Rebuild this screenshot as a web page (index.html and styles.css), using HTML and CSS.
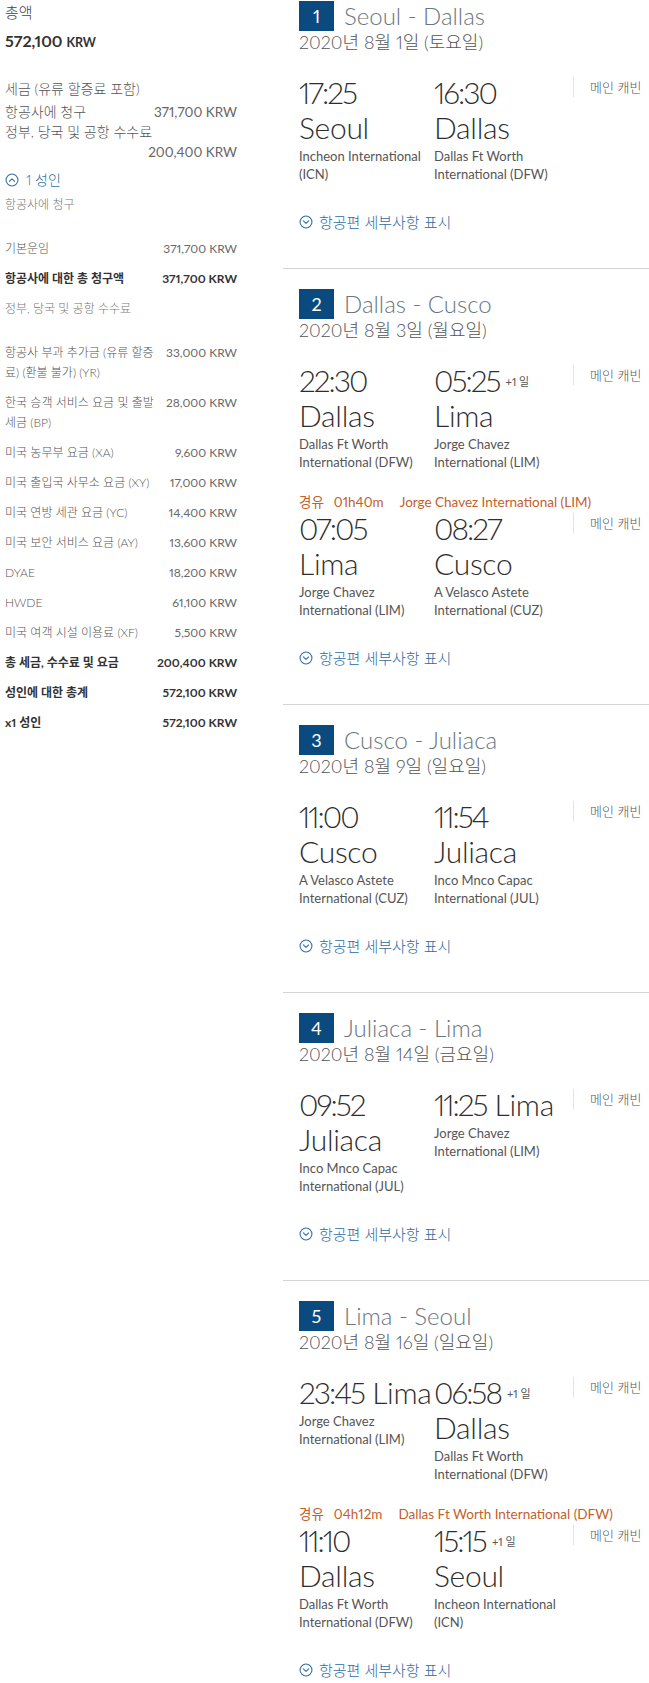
FILE: index.html
```html
<!DOCTYPE html>
<html lang="ko">
<head>
<meta charset="utf-8">
<title>여정 요약</title>
<link rel="stylesheet" href="styles.css">
</head>
<body>
<div class="page">
  <aside class="summary">
    <div class="total-label">총액</div>
    <div class="total-amount">572,100 <span class="cur">KRW</span></div>
    <div class="tax-head">세금 (유류 할증료 포함)</div>
    <div class="split"><span>항공사에 청구</span><span class="split-amt">371,700 KRW</span></div>
    <div class="split"><span>정부, 당국 및 공항 수수료</span><span class="split-amt">200,400 KRW</span></div>
    <div class="toggle">
      <svg class="ico" viewBox="0 0 16 16"><circle cx="8" cy="8" r="6.8"/><path d="M5 9.6l3-3 3 3"/></svg>
      <span>1 성인</span>
    </div>
    <div class="group-label">항공사에 청구</div>
    <div class="row"><span class="label">기본운임</span><span class="amt">371,700 KRW</span></div>
    <div class="row strong"><span class="label">항공사에 대한 총 청구액</span><span class="amt">371,700 KRW</span></div>
    <div class="group-label">정부, 당국 및 공항 수수료</div>
    <div class="row"><span class="label">항공사 부과 추가금 (유류 할증료) (환불 불가) (YR)</span><span class="amt">33,000 KRW</span></div>
    <div class="row"><span class="label">한국 승객 서비스 요금 및 출발 세금 (BP)</span><span class="amt">28,000 KRW</span></div>
    <div class="row"><span class="label">미국 농무부 요금 (XA)</span><span class="amt">9,600 KRW</span></div>
    <div class="row"><span class="label">미국 출입국 사무소 요금 (XY)</span><span class="amt">17,000 KRW</span></div>
    <div class="row"><span class="label">미국 연방 세관 요금 (YC)</span><span class="amt">14,400 KRW</span></div>
    <div class="row"><span class="label">미국 보안 서비스 요금 (AY)</span><span class="amt">13,600 KRW</span></div>
    <div class="row"><span class="label">DYAE</span><span class="amt">18,200 KRW</span></div>
    <div class="row"><span class="label">HWDE</span><span class="amt">61,100 KRW</span></div>
    <div class="row"><span class="label">미국 여객 시설 이용료 (XF)</span><span class="amt">5,500 KRW</span></div>
    <div class="row strong"><span class="label">총 세금, 수수료 및 요금</span><span class="amt">200,400 KRW</span></div>
    <div class="row strong"><span class="label">성인에 대한 총계</span><span class="amt">572,100 KRW</span></div>
    <div class="row strong"><span class="label">x1 성인</span><span class="amt">572,100 KRW</span></div>
  </aside>

  <main class="trips">
    <section class="segment">
      <div class="seg-head"><span class="badge">1</span><span class="route">Seoul - Dallas</span></div>
      <div class="seg-date">2020년 8월 1일 (토요일)</div>
      <div class="flight">
        <div class="pt"><div class="tc"><span class="time">17:25</span><span class="city">Seoul</span></div><div class="airport">Incheon International (ICN)</div></div>
        <div class="pt"><div class="tc"><span class="time">16:30</span><span class="city">Dallas</span></div><div class="airport">Dallas Ft Worth International (DFW)</div></div>
        <div class="cabin">메인 캐빈</div>
      </div>
      <div class="details"><svg class="ico" viewBox="0 0 16 16"><circle cx="8" cy="8" r="6.8"/><path d="M5 6.6l3 3 3-3"/></svg><span>항공편 세부사항 표시</span></div>
    </section>

    <section class="segment">
      <div class="seg-head"><span class="badge">2</span><span class="route">Dallas - Cusco</span></div>
      <div class="seg-date">2020년 8월 3일 (월요일)</div>
      <div class="flight">
        <div class="pt"><div class="tc"><span class="time">22:30</span><span class="city">Dallas</span></div><div class="airport">Dallas Ft Worth International (DFW)</div></div>
        <div class="pt"><div class="tc"><span class="time">05:25</span><span class="plus">+1 일</span><span class="city">Lima</span></div><div class="airport">Jorge Chavez International (LIM)</div></div>
        <div class="cabin">메인 캐빈</div>
      </div>
      <div class="layover"><span class="lay-k">경유</span><span class="lay-t">01h40m</span><span>Jorge Chavez International (LIM)</span></div>
      <div class="flight">
        <div class="pt"><div class="tc"><span class="time">07:05</span><span class="city">Lima</span></div><div class="airport">Jorge Chavez International (LIM)</div></div>
        <div class="pt"><div class="tc"><span class="time">08:27</span><span class="city">Cusco</span></div><div class="airport">A Velasco Astete International (CUZ)</div></div>
        <div class="cabin">메인 캐빈</div>
      </div>
      <div class="details"><svg class="ico" viewBox="0 0 16 16"><circle cx="8" cy="8" r="6.8"/><path d="M5 6.6l3 3 3-3"/></svg><span>항공편 세부사항 표시</span></div>
    </section>

    <section class="segment">
      <div class="seg-head"><span class="badge">3</span><span class="route">Cusco - Juliaca</span></div>
      <div class="seg-date">2020년 8월 9일 (일요일)</div>
      <div class="flight">
        <div class="pt"><div class="tc"><span class="time">11:00</span><span class="city">Cusco</span></div><div class="airport">A Velasco Astete International (CUZ)</div></div>
        <div class="pt"><div class="tc"><span class="time">11:54</span><span class="city">Juliaca</span></div><div class="airport">Inco Mnco Capac International (JUL)</div></div>
        <div class="cabin">메인 캐빈</div>
      </div>
      <div class="details"><svg class="ico" viewBox="0 0 16 16"><circle cx="8" cy="8" r="6.8"/><path d="M5 6.6l3 3 3-3"/></svg><span>항공편 세부사항 표시</span></div>
    </section>

    <section class="segment">
      <div class="seg-head"><span class="badge">4</span><span class="route">Juliaca - Lima</span></div>
      <div class="seg-date">2020년 8월 14일 (금요일)</div>
      <div class="flight">
        <div class="pt"><div class="tc"><span class="time">09:52</span><span class="city">Juliaca</span></div><div class="airport">Inco Mnco Capac International (JUL)</div></div>
        <div class="pt"><div class="tc one-line"><span class="time">11:25</span><span class="city">Lima</span></div><div class="airport">Jorge Chavez International (LIM)</div></div>
        <div class="cabin">메인 캐빈</div>
      </div>
      <div class="details"><svg class="ico" viewBox="0 0 16 16"><circle cx="8" cy="8" r="6.8"/><path d="M5 6.6l3 3 3-3"/></svg><span>항공편 세부사항 표시</span></div>
    </section>

    <section class="segment">
      <div class="seg-head"><span class="badge">5</span><span class="route">Lima - Seoul</span></div>
      <div class="seg-date">2020년 8월 16일 (일요일)</div>
      <div class="flight">
        <div class="pt"><div class="tc one-line"><span class="time">23:45</span><span class="city">Lima</span></div><div class="airport">Jorge Chavez International (LIM)</div></div>
        <div class="pt"><div class="tc"><span class="time">06:58</span><span class="plus">+1 일</span><span class="city">Dallas</span></div><div class="airport">Dallas Ft Worth International (DFW)</div></div>
        <div class="cabin">메인 캐빈</div>
      </div>
      <div class="layover"><span class="lay-k">경유</span><span class="lay-t">04h12m</span><span>Dallas Ft Worth International (DFW)</span></div>
      <div class="flight">
        <div class="pt"><div class="tc"><span class="time">11:10</span><span class="city">Dallas</span></div><div class="airport">Dallas Ft Worth International (DFW)</div></div>
        <div class="pt"><div class="tc"><span class="time">15:15</span><span class="plus">+1 일</span><span class="city">Seoul</span></div><div class="airport">Incheon International (ICN)</div></div>
        <div class="cabin">메인 캐빈</div>
      </div>
      <div class="details"><svg class="ico" viewBox="0 0 16 16"><circle cx="8" cy="8" r="6.8"/><path d="M5 6.6l3 3 3-3"/></svg><span>항공편 세부사항 표시</span></div>
    </section>
  </main>
</div>
</body>
</html>
```
FILE: styles.css
```css
* { box-sizing: border-box; }

html, body {
  margin: 0;
  padding: 0;
  background: #ffffff;
}

body {
  font-family: "Lato", "Noto Sans CJK KR", sans-serif;
  color: #333333;
  font-variant-numeric: proportional-nums;
}

.page {
  display: flex;
  width: 649px;
  align-items: flex-start;
}

/* ---------- summary ---------- */
.summary {
  width: 283px;
  flex: none;
  padding: 0 46px 0 5px;
}

.total-label {
  font-size: 15px;
  line-height: 24px;
  font-weight: 300;
  color: #444;
}

.total-amount {
  margin-top: 7px;
  font-size: 16px;
  line-height: 20px;
  font-weight: 700;
  color: #333;
}

.total-amount .cur {
  font-size: 12.5px;
}

.tax-head {
  margin-top: 26px;
  font-size: 14px;
  line-height: 20px;
  font-weight: 300;
  color: #555;
}

.split {
  display: flex;
  flex-wrap: wrap;
  font-size: 14px;
  line-height: 20px;
  font-weight: 300;
  color: #555;
}

.tax-head + .split { margin-top: 3px; }

.split-amt {
  margin-left: auto;
  font-size: 13.5px;
  font-weight: 400;
  color: #666;
  white-space: nowrap;
}

.toggle {
  margin-top: 8px;
  display: flex;
  align-items: center;
  gap: 7px;
  font-size: 14px;
  line-height: 20px;
  font-weight: 300;
  color: #2f6fa3;
}

.ico {
  width: 14px;
  height: 14px;
  flex: none;
  fill: none;
  stroke: currentColor;
  stroke-width: 1.2;
  stroke-linecap: round;
  stroke-linejoin: round;
}

.group-label {
  margin-top: 5px;
  margin-bottom: 24px;
  font-size: 12px;
  line-height: 20px;
  font-weight: 300;
  color: #777;
}

.row {
  display: flex;
  gap: 8px;
  margin-bottom: 10px;
  font-size: 12px;
  line-height: 20px;
  font-weight: 300;
  color: #555;
}

.row .label {
  flex: 1;
  min-width: 0;
}

.row .amt {
  flex: none;
  white-space: nowrap;
  text-align: right;
  font-weight: 400;
  color: #6a6a6a;
}

.row.strong .label,
.row.strong .amt {
  font-weight: 700;
  color: #333;
}

/* ---------- trips ---------- */
.trips {
  flex: 1;
  min-width: 0;
}

.segment {
  padding: 20px 0 36px 16px;
  border-bottom: 1px solid #d4d4d4;
}

.segment:first-child {
  padding-top: 1px;
}

.seg-head {
  display: flex;
  align-items: center;
  gap: 10px;
  height: 30px;
}

.badge {
  width: 35px;
  height: 30px;
  background: #0b4a7f;
  color: #ffffff;
  font-size: 18px;
  line-height: 30px;
  text-align: center;
}

.route {
  font-size: 24px;
  font-weight: 300;
  line-height: 30px;
  color: #6b7780;
  white-space: nowrap;
}

.seg-date {
  font-size: 18px;
  line-height: 22px;
  font-weight: 300;
  color: #555;
}

.flight {
  margin-top: 22px;
  display: grid;
  grid-template-columns: 135px 139px 1fr;
  align-items: start;
}

.layover + .flight {
  margin-top: 0;
}

.pt {
  font-weight: 300;
  color: #2e2e2e;
}

.tc {
  font-size: 30px;
  line-height: 35px;
}

.tc .time {
  letter-spacing: -2px;
}

.tc .city {
  display: block;
  letter-spacing: -0.3px;
}

.tc.one-line {
  white-space: nowrap;
}

.tc.one-line .city {
  display: inline;
  margin-left: 8px;
}

.plus {
  margin-left: 6px;
  font-size: 11px;
  line-height: 1;
  font-weight: 400;
  color: #555;
  vertical-align: 6px;
}

.airport {
  margin-top: 2px;
  font-size: 13px;
  line-height: 18px;
  font-weight: 400;
  color: #555;
}

.cabin {
  margin-top: 2px;
  height: 20px;
  border-left: 1px solid #e3e3e3;
  padding-left: 16px;
  font-size: 13px;
  line-height: 20px;
  font-weight: 300;
  color: #555;
  white-space: nowrap;
}

.layover {
  margin-top: 22px;
  display: flex;
  align-items: baseline;
  font-size: 13.5px;
  line-height: 18px;
  color: #c4602c;
  white-space: nowrap;
}

.lay-k { margin-right: 10px; }
.lay-t { margin-right: 16px; }

.details {
  margin-top: 29px;
  display: flex;
  align-items: center;
  gap: 6px;
  font-size: 15px;
  line-height: 20px;
  font-weight: 300;
  color: #2d6da3;
}

.details .ico {
  width: 14px;
  height: 14px;
}
```
